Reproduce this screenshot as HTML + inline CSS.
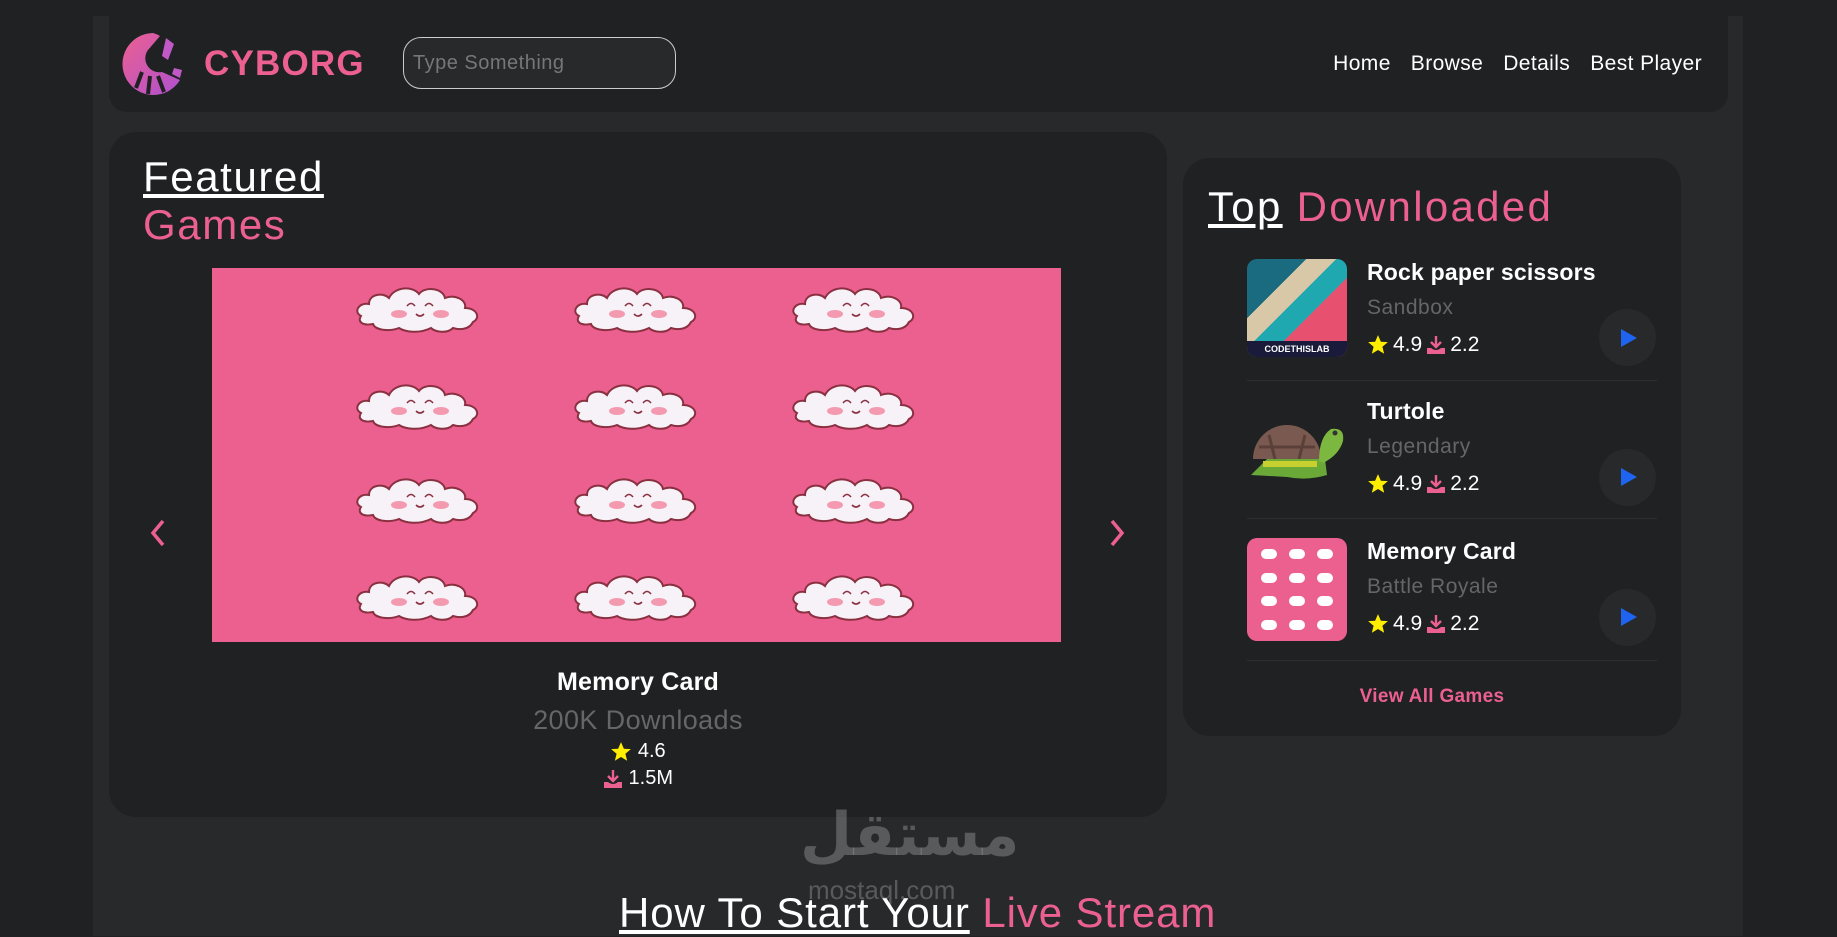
<!DOCTYPE html>
<html><head><meta charset="utf-8"><style>
*{margin:0;padding:0;box-sizing:border-box}
body{width:1837px;height:936px;background:#1f2122;font-family:"Liberation Sans",sans-serif;position:relative;overflow:hidden;color:#fff}
.abs{position:absolute}
.wrap{left:93px;top:16px;width:1650px;height:920px;background:#27292a}
.header{left:109px;top:16px;width:1619px;height:96px;background:#1f2122;border-radius:0 0 18px 18px}
.card{background:#1f2122;border-radius:27px}
.pink{color:#ec6090}
.nav span{margin-left:20px}
.ttl{font-weight:bold;font-size:23px;letter-spacing:.2px}
.sub{color:#666;font-size:21px;letter-spacing:.5px}
.st{font-size:21px;display:flex;align-items:center;gap:4px}
.play{width:57px;height:57px;border-radius:50%;background:#27292a}
.div{left:1247px;width:410px;height:1px;background:#2c2e30}
.dl{display:inline-block;vertical-align:middle}
</style></head><body>
<svg width="0" height="0" style="position:absolute"><defs>
<symbol id="dl" viewBox="0 0 20 20"><path d="M10 1 V12 M5 7 L10 12 L15 7" stroke="#ec6090" stroke-width="2.4" fill="none"/><path d="M1 13 H5 Q10 17 15 13 H19 V19 H1Z" fill="#ec6090"/></symbol>
<symbol id="star" viewBox="0 0 20 20"><path d="M10 1 L12.6 7 L19 7.4 L14 11.6 L15.6 18 L10 14.5 L4.4 18 L6 11.6 L1 7.4 L7.4 7Z" fill="#ffee00"/></symbol>
</defs></svg>
<div class="abs wrap"></div>
<div class="abs header"></div>
<svg class="abs" style="left:122px;top:32px" width="62" height="64" viewBox="0 0 62 64">
<defs><linearGradient id="g" x1="0" y1="0" x2="1" y2="1"><stop offset="0" stop-color="#ec6090"/><stop offset="1" stop-color="#b050d0"/></linearGradient></defs>
<path d="M31 1 A31 31 0 1 0 58 48 L40 40 A14 14 0 0 1 26 18 L38 4 A31 31 0 0 0 31 1Z" fill="url(#g)"/>
<path d="M44 6 L52 12 L46 28 L40 24Z M52 36 L60 38 L58 46 L50 42Z" fill="#c058c8"/>
<path d="M20 40 L14 56 M28 44 L26 62 M36 44 L42 60" stroke="#1f2122" stroke-width="4"/>
</svg>
<div class="abs pink" style="left:204px;top:44px;font-size:35px;font-weight:bold;letter-spacing:1.2px">CYBORG</div>
<div class="abs" style="left:403px;top:37px;width:273px;height:52px;border:1px solid #ccc;border-radius:18px;background:#27292a;color:#777;font-size:20px;padding:14px 9px;letter-spacing:.5px">Type Something</div>
<div class="abs nav" style="right:135px;top:52px;font-size:21px;letter-spacing:.4px"><span>Home</span><span>Browse</span><span>Details</span><span>Best Player</span></div>

<div class="abs card" style="left:109px;top:132px;width:1058px;height:685px"></div>
<div class="abs" style="left:143px;top:153px;font-size:42px;line-height:48px;letter-spacing:1.6px"><u>Featured</u><br><span class="pink">Games</span></div>
<svg class="abs" style="left:212px;top:268px" width="849" height="374">
<defs><g id="c">
<path d="M-58 6 C-66 2 -60 -8 -50 -6 C-50 -16 -36 -18 -30 -12 C-24 -24 -6 -24 0 -16 C6 -24 24 -22 26 -12 C36 -16 48 -10 46 -2 C58 -2 62 8 54 12 C50 20 40 20 34 18 C28 24 16 22 12 18 C0 24 -14 22 -20 18 C-30 22 -44 20 -46 14 C-56 16 -62 12 -58 6Z" fill="#f6f2f8" stroke="#8a3040" stroke-width="2"/>
<ellipse cx="-20" cy="4" rx="8" ry="4" fill="#f49ab0"/><ellipse cx="22" cy="4" rx="8" ry="4" fill="#f49ab0"/>
<path d="M-12 -4 q4 -5 8 0 M6 -4 q4 -5 8 0 M-3 4 q4 4 8 0" stroke="#8a3040" stroke-width="1.6" fill="none"/>
</g></defs>
<rect width="849" height="374" fill="#ec6090"/>
<g><use href="#c" x="207" y="42"/><use href="#c" x="425" y="42"/><use href="#c" x="643" y="42"/>
<use href="#c" x="207" y="139"/><use href="#c" x="425" y="139"/><use href="#c" x="643" y="139"/>
<use href="#c" x="207" y="233"/><use href="#c" x="425" y="233"/><use href="#c" x="643" y="233"/>
<use href="#c" x="207" y="330"/><use href="#c" x="425" y="330"/><use href="#c" x="643" y="330"/></g>
</svg>
<svg class="abs" style="left:148px;top:518px" width="20" height="30"><path d="M15 3 L5 15 L15 27" stroke="#ec6090" stroke-width="3.5" fill="none"/></svg>
<svg class="abs" style="left:1107px;top:518px" width="20" height="30"><path d="M5 3 L15 15 L5 27" stroke="#ec6090" stroke-width="3.5" fill="none"/></svg>
<div class="abs" style="left:109px;width:1058px;top:668px;text-align:center">
<div class="ttl" style="font-size:25px">Memory Card</div>
<div style="color:#666;font-size:27px;margin-top:8px;letter-spacing:.4px">200K Downloads</div>
<div style="font-size:20px;margin-top:4px"><svg class="dl" width="22" height="22"><use href="#star"/></svg> 4.6</div>
<div style="font-size:20px;margin-top:4px"><svg class="dl" width="20" height="20"><use href="#dl"/></svg> 1.5M</div>
</div>

<div class="abs card" style="left:1183px;top:158px;width:498px;height:578px"></div>
<div class="abs" style="left:1208px;top:183px;font-size:42px;letter-spacing:2.3px"><u>Top</u> <span class="pink">Downloaded</span></div>

<div class="abs" style="left:1247px;top:259px;width:100px;height:98px;border-radius:10px;background:linear-gradient(135deg,#1a6a80 0 30%,#d9c8a8 30% 45%,#20a8b0 45% 60%,#e85070 60%);overflow:hidden"><div style="position:absolute;bottom:0;width:100%;height:16px;background:#1a1a3a;font-size:9px;text-align:center;padding-top:3px;font-weight:bold">CODETHISLAB</div></div>
<svg class="abs" style="left:1247px;top:415px" width="100" height="70"><path d="M6 44 A34 34 0 0 1 74 44Z" fill="#7a5a50"/><path d="M22 20 L28 44 M58 20 L52 44 M12 32 H68" stroke="#5a4038" stroke-width="3"/><path d="M4 60 L20 44 H78 L80 60 Q60 66 40 62Z" fill="#6aa838"/><rect x="16" y="46" width="54" height="6" fill="#c8d030"/><path d="M72 46 Q72 22 84 14 Q98 12 96 26 Q92 40 76 48Z" fill="#7cb840"/><circle cx="88" cy="18" r="2.5" fill="#333"/></svg>
<div class="abs" style="left:1247px;top:538px;width:100px;height:103px;border-radius:10px;background:#ec6090;display:grid;grid-template-columns:repeat(3,1fr);align-items:center;justify-items:center;padding:4px 8px">
<i style="width:16px;height:10px;background:#fff;border-radius:6px"></i><i style="width:16px;height:10px;background:#fff;border-radius:6px"></i><i style="width:16px;height:10px;background:#fff;border-radius:6px"></i><i style="width:16px;height:10px;background:#fff;border-radius:6px"></i><i style="width:16px;height:10px;background:#fff;border-radius:6px"></i><i style="width:16px;height:10px;background:#fff;border-radius:6px"></i><i style="width:16px;height:10px;background:#fff;border-radius:6px"></i><i style="width:16px;height:10px;background:#fff;border-radius:6px"></i><i style="width:16px;height:10px;background:#fff;border-radius:6px"></i><i style="width:16px;height:10px;background:#fff;border-radius:6px"></i><i style="width:16px;height:10px;background:#fff;border-radius:6px"></i><i style="width:16px;height:10px;background:#fff;border-radius:6px"></i></div>

<div class="abs" style="left:1367px;top:259px"><div class="ttl">Rock paper scissors</div><div class="sub" style="margin-top:10px">Sandbox</div><div class="st" style="margin-top:13px"><svg width="22" height="22"><use href="#star"/></svg>4.9 <svg width="20" height="20"><use href="#dl"/></svg>2.2</div></div>
<div class="abs" style="left:1367px;top:398px"><div class="ttl">Turtole</div><div class="sub" style="margin-top:10px">Legendary</div><div class="st" style="margin-top:13px"><svg width="22" height="22"><use href="#star"/></svg>4.9 <svg width="20" height="20"><use href="#dl"/></svg>2.2</div></div>
<div class="abs" style="left:1367px;top:538px"><div class="ttl">Memory Card</div><div class="sub" style="margin-top:10px">Battle Royale</div><div class="st" style="margin-top:13px"><svg width="22" height="22"><use href="#star"/></svg>4.9 <svg width="20" height="20"><use href="#dl"/></svg>2.2</div></div>

<div class="abs play" style="left:1599px;top:309px"></div><div class="abs play" style="left:1599px;top:449px"></div><div class="abs play" style="left:1599px;top:589px"></div>
<svg class="abs" style="left:1619px;top:327px" width="20" height="22"><path d="M2 2 L18 11 L2 20Z" fill="#1e64f0"/></svg>
<svg class="abs" style="left:1619px;top:466px" width="20" height="22"><path d="M2 2 L18 11 L2 20Z" fill="#1e64f0"/></svg>
<svg class="abs" style="left:1619px;top:606px" width="20" height="22"><path d="M2 2 L18 11 L2 20Z" fill="#1e64f0"/></svg>
<div class="abs div" style="top:380px"></div><div class="abs div" style="top:518px"></div><div class="abs div" style="top:660px"></div>
<div class="abs pink" style="left:1183px;width:498px;text-align:center;top:686px;font-weight:bold;font-size:19px;letter-spacing:.3px">View All Games</div>

<div class="abs" style="left:800px;top:800px;font-size:60px;color:rgba(150,150,150,.45);font-family:'DejaVu Sans',sans-serif;font-weight:bold">مستقل</div>
<div class="abs" style="left:808px;top:875px;font-size:26px;color:rgba(150,150,150,.45)">mostaql.com</div>
<div class="abs" style="left:619px;top:889px;font-size:42px;letter-spacing:.9px"><u>How To Start Your</u> <span class="pink">Live Stream</span></div>
</body></html>
